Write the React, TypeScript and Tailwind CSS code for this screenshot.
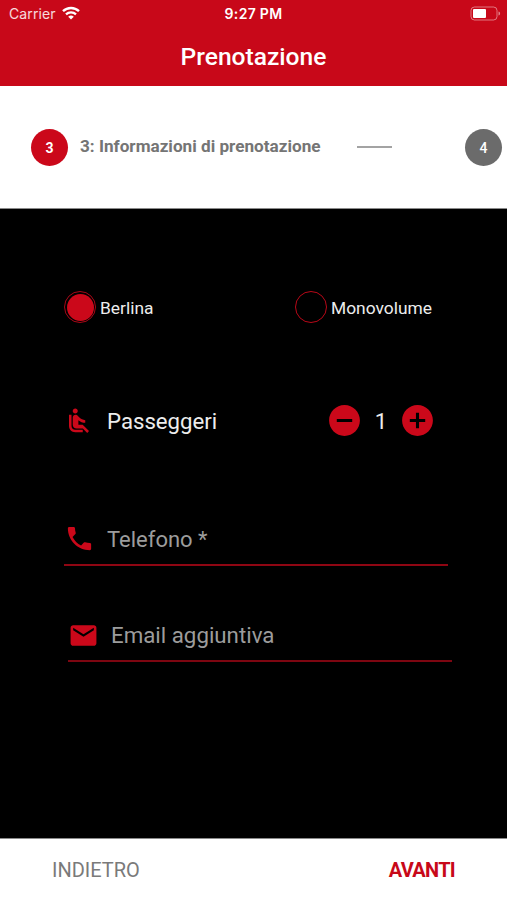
import { useState } from "react";
import {
  MdAddCircle,
  MdAirlineSeatReclineNormal,
  MdEmail,
  MdPhone,
  MdRemoveCircle,
} from "react-icons/md";

type CarType = "berlina" | "monovolume";

function StatusBar() {
  return (
    <div className="relative flex h-7 items-center justify-between pl-[9px] pr-[6px] font-['Inter',sans-serif] text-white">
      <div className="flex items-center gap-[6px]">
        <span className="text-[14px] leading-4 tracking-[0.1px] text-white/85">
          Carrier
        </span>
        <svg width="18" height="14" viewBox="0 0 18 14" fill="none" className="-mt-[2px]">
          <path d="M1 5.2a11.6 11.6 0 0 1 16 0" stroke="white" strokeWidth="2.4" />
          <path d="M4 8.3a7.3 7.3 0 0 1 10 0" stroke="white" strokeWidth="2.3" />
          <path d="M9 13.6 6.2 10.7a4.2 4.2 0 0 1 5.6 0Z" fill="white" />
        </svg>
      </div>
      <span className="absolute left-1/2 top-[6px] -translate-x-1/2 whitespace-nowrap text-[14px] font-semibold leading-4 tracking-[0.3px]">
        9:27 PM
      </span>
      <svg width="31" height="15" viewBox="0 0 31 15" fill="none" className="-mt-[2px]">
        <rect x="1" y="1" width="26" height="13" rx="3.5" stroke="white" strokeOpacity="0.45" />
        <rect x="3" y="3" width="13" height="9" rx="1" fill="white" />
        <path d="M28.5 5.5v4c1-.4 1.6-1.1 1.6-2s-.6-1.6-1.6-2Z" fill="white" fillOpacity="0.5" />
      </svg>
    </div>
  );
}

interface RadioProps {
  label: string;
  checked: boolean;
  onSelect: () => void;
}

function Radio({ label, checked, onSelect }: RadioProps) {
  return (
    <button
      type="button"
      role="radio"
      aria-checked={checked}
      onClick={onSelect}
      className="flex items-center gap-1"
    >
      <span
        className={`flex size-8 items-center justify-center rounded-full border ${
          checked ? "border-[#a80717]" : "border-[#b80818]"
        }`}
      >
        {checked && <span className="size-[27px] shrink-0 rounded-full bg-[#cb081a]" />}
      </span>
      <span className="mt-px text-[17.4px] leading-6 text-[#ededed]">{label}</span>
    </button>
  );
}

export default function App() {
  const [carType, setCarType] = useState<CarType>("berlina");
  const [passengers, setPassengers] = useState(1);

  return (
    <div className="flex h-[900px] w-[507px] flex-col overflow-hidden bg-black font-['Roboto',sans-serif]">
      {/* Header */}
      <header className="h-[86px] shrink-0 bg-[#c80819]">
        <StatusBar />
        <h1 className="pt-[13px] text-center text-[24.6px] font-medium leading-8 text-white">
          Prenotazione
        </h1>
      </header>

      {/* Stepper */}
      <div className="flex h-[123px] shrink-0 items-center border-b border-[#8a8a8a] bg-white pl-[31px]">
        <span className="flex size-[37px] shrink-0 items-center justify-center rounded-full bg-[#cb081a] pt-[3px] text-[14px] font-bold text-white">
          3
        </span>
        <span className="ml-3 w-[240px] shrink-0 whitespace-nowrap text-[17.15px] font-bold text-[#757575]">
          3: Informazioni di prenotazione
        </span>
        <span className="ml-[37px] h-[2px] w-[35px] shrink-0 bg-[#a3a3a3]" />
        <span className="ml-[73px] flex size-[37px] shrink-0 items-center justify-center rounded-full bg-[#6b6b6b] pt-[3px] text-[14px] font-medium text-white">
          4
        </span>
      </div>

      {/* Form */}
      <main className="flex-1 pl-16">
        <div className="flex pt-[82px]" role="radiogroup">
          <div className="w-[231px]">
            <Radio
              label="Berlina"
              checked={carType === "berlina"}
              onSelect={() => setCarType("berlina")}
            />
          </div>
          <Radio
            label="Monovolume"
            checked={carType === "monovolume"}
            onSelect={() => setCarType("monovolume")}
          />
        </div>

        <div className="mt-[78px] flex h-[38px] items-center">
          <MdAirlineSeatReclineNormal size={30} className="mt-px text-[#cb081a]" />
          <span className="ml-[13px] mt-[3px] w-[219px] text-[22.2px] text-[#ededed]">
            Passeggeri
          </span>
          <button
            type="button"
            aria-label="Meno"
            onClick={() => setPassengers((n) => Math.max(1, n - 1))}
          >
            <MdRemoveCircle size={37} className="text-[#cb081a]" />
          </button>
          <span className="mt-[3px] w-[36px] text-center text-[22.2px] text-[#ededed]">
            {passengers}
          </span>
          <button
            type="button"
            aria-label="Più"
            onClick={() => setPassengers((n) => n + 1)}
          >
            <MdAddCircle size={37} className="text-[#cb081a]" />
          </button>
        </div>

        <label className="mt-[74px] flex h-[53px] w-[384px] items-center border-b-2 border-[#8f0613]">
          <MdPhone size={31} className="text-[#cb081a]" />
          <input
            type="tel"
            placeholder="Telefono *"
            className="ml-3 mt-[2px] w-[300px] bg-transparent text-[22px] text-white outline-none placeholder:text-[#9c9c9c]"
          />
        </label>

        <label className="ml-1 mt-[43px] flex h-[53px] w-[384px] items-center border-b-2 border-[#7d0611]">
          <MdEmail size={31} className="mt-[2px] text-[#cb081a]" />
          <input
            type="email"
            placeholder="Email aggiuntiva"
            className="ml-3 mt-[3px] w-[300px] bg-transparent text-[22.3px] text-white outline-none placeholder:text-[#9c9c9c]"
          />
        </label>
      </main>

      {/* Footer */}
      <footer className="flex h-[62px] shrink-0 items-center justify-between border-t border-[#8a8a8a] bg-white pl-[52px] pr-[52px] text-[20px]">
        <button type="button" className="text-[#7a7a7a]">
          INDIETRO
        </button>
        <button type="button" className="font-bold tracking-[-0.7px] text-[#c80819]">
          AVANTI
        </button>
      </footer>
    </div>
  );
}
